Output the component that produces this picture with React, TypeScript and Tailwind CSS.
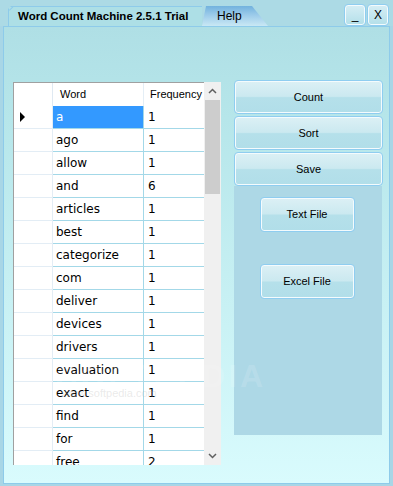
import React from "react";

const rows: [string, string][] = [
  ["a", "1"],
  ["ago", "1"],
  ["allow", "1"],
  ["and", "6"],
  ["articles", "1"],
  ["best", "1"],
  ["categorize", "1"],
  ["com", "1"],
  ["deliver", "1"],
  ["devices", "1"],
  ["drivers", "1"],
  ["evaluation", "1"],
  ["exact", "1"],
  ["find", "1"],
  ["for", "1"],
  ["free", "2"],
];

function Btn({ label, className }: { label: string; className: string }) {
  return (
    <div
      className={
        "flex items-center justify-center rounded-[4px] border border-[#8fcdf0] shadow-[inset_0_0_0_1px_#f4fbfd] bg-[linear-gradient(to_bottom,#dcf0f5_0%,#cbe9f0_48%,#b5e0ea_52%,#b1dee9_100%)] text-[11px] text-black " +
        className
      }
    >
      {label}
    </div>
  );
}

const cellFont = { fontFamily: '"DejaVu Sans", Verdana, sans-serif' };

export default function App() {
  return (
    <div
      className="relative w-[393px] h-[486px] bg-[#a8d6e6] flex flex-col overflow-hidden"
      style={{ fontFamily: '"Liberation Sans", Arial, sans-serif' }}
    >
      {/* top strip */}
      <div className="h-[26px] flex items-end bg-[#acdae5] pl-[8px]">
        <div className="relative h-[20px] w-[194px] bg-[#addfe6] border-l border-t border-[#8ecbea] [clip-path:polygon(3px_0,100%_0,100%_100%,0_100%,0_3px)] flex items-center pl-[9px] text-[11.5px] font-bold text-black">
          <span className="absolute left-0 top-0 w-[5px] h-[5px] border-t border-[#8ecbea] origin-top-left rotate-[-45deg] translate-y-[3px]"></span>
          Word Count Machine 2.5.1 Trial
        </div>
        <div className="h-[20px] w-[66px] [clip-path:polygon(4px_0,50px_0,66px_100%,0_100%)] bg-[linear-gradient(to_bottom,#72b2de_0%,#9ccbea_45%,#c9e8f4_100%)] flex items-center pl-[15px] text-[12px] text-black">
          Help
        </div>
        <div className="flex-1 h-[26px] flex flex-col">
          <div className="flex-1 flex justify-end items-start pt-[4px] pr-[4px] gap-[1px]">
            <div className="w-[22px] h-[22px] rounded-[4px] border border-[#8fcdf0] shadow-[inset_0_0_0_1px_#f4fbfd] bg-[linear-gradient(to_bottom,#d6eef5,#b3dfe9)] flex items-end justify-center pb-[4px] text-[12px] text-black leading-none">
              _
            </div>
            <div className="w-[22px] h-[22px] rounded-[4px] border border-[#8fcdf0] shadow-[inset_0_0_0_1px_#f4fbfd] bg-[linear-gradient(to_bottom,#d6eef5,#b3dfe9)] flex items-center justify-center text-[12px] text-black leading-none">
              X
            </div>
          </div>
        </div>
      </div>

      {/* main panel */}
      <div className="ml-[3px] mr-[3px] h-[458px] border-l border-r border-b border-t border-[#8ecbea] bg-[linear-gradient(to_bottom,#afdfe5_0%,#b6e6ea_20%,#d9fbfd_100%)] flex pt-[53px] pl-[9px]">
        {/* grid */}
        <div className="mt-[2px] w-[208px] h-[383px] flex flex-col bg-white border-l border-t border-[#a0a0a0] text-[12px] text-black">
          <div className="flex flex-1 min-h-0">
            <div className="flex flex-col w-[191px] overflow-hidden">
              {/* header */}
              <div className="flex h-[23px] shrink-0 bg-white text-[11px]">
                <div className="w-[39px] border-r border-[#dfe9f2]"></div>
                <div className="w-[91px] border-r border-[#e4eef6] flex items-center pl-[7px]">Word</div>
                <div className="flex-1 flex items-center pl-[6px] whitespace-nowrap overflow-hidden">Frequency</div>
              </div>
              {rows.map(([w, f], i) => (
                <div key={w} className="flex h-[23px] shrink-0" style={cellFont}>
                  <div className="w-[39px] border-r border-b border-[#e3edf5] bg-white flex items-center pl-[6px]">
                    {i === 0 && (
                      <svg width="6" height="10" viewBox="0 0 6 10">
                        <path d="M0 0 L5 5 L0 10 Z" fill="#000" />
                      </svg>
                    )}
                  </div>
                  <div
                    className={
                      "w-[91px] border-r border-b border-[#a3d8e8] flex items-center pl-[3px] text-[12px] " +
                      (i === 0 ? "bg-[#3399ff] text-white" : "")
                    }
                  >
                    {w}
                  </div>
                  <div className="flex-1 border-b border-[#a3d8e8] flex items-center pl-[4px] text-[12px]">{f}</div>
                </div>
              ))}
            </div>
            {/* scrollbar */}
            <div className="w-[17px] -mt-px bg-[#f0f0f0] flex flex-col items-center">
              <div className="h-[18px] w-full flex items-center justify-center">
                <svg width="9" height="6" viewBox="0 0 9 6">
                  <path d="M1 5 L4.5 1.5 L8 5" stroke="#606060" strokeWidth="1.5" fill="none" />
                </svg>
              </div>
              <div className="w-[15px] h-[94px] bg-[#cdcdcd]"></div>
              <div className="flex-1"></div>
              <div className="h-[18px] w-full flex items-center justify-center">
                <svg width="9" height="6" viewBox="0 0 9 6">
                  <path d="M1 1 L4.5 4.5 L8 1" stroke="#606060" strokeWidth="1.5" fill="none" />
                </svg>
              </div>
            </div>
          </div>
        </div>

        {/* right column */}
        <div className="ml-[13px] w-[149px] flex flex-col">
          <div className="flex flex-col gap-[2px]">
            <Btn label="Count" className="h-[34px]" />
            <Btn label="Sort" className="h-[34px]" />
            <Btn label="Save" className="h-[34px]" />
          </div>
          <div className="w-[148px] h-[249px] bg-[#add8e6] flex flex-col items-center pt-[11px] pr-[2px]">
            <Btn label="Text File" className="w-[95px] h-[35px]" />
            <Btn label="Excel File" className="w-[95px] h-[35px] mt-[32px]" />
          </div>
        </div>
      </div>

      {/* watermark overlay */}
      <div className="absolute left-[56px] top-[352px] text-[32px] font-bold tracking-[3px] text-white/15 pointer-events-none">
        SOFTPEDIA
      </div>
      <div className="absolute left-[62px] top-[385px] text-[11px] text-[#b8b8b8]/30 pointer-events-none">
        www.softpedia.com
      </div>
    </div>
  );
}
